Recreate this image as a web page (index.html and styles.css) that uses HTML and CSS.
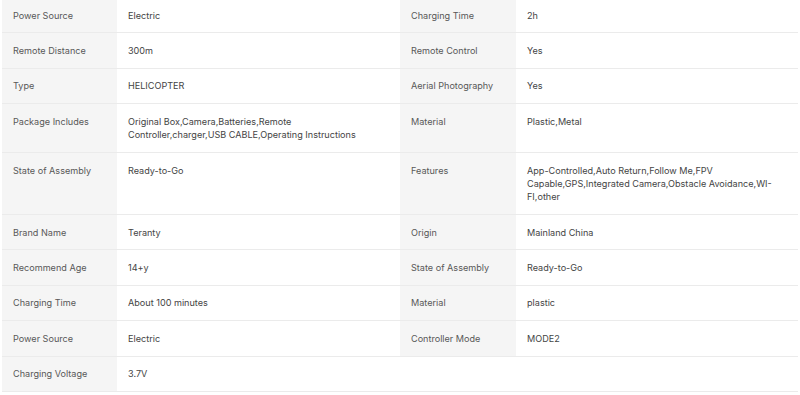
FILE: index.html
```html
<!DOCTYPE html>
<html lang="en">
<head>
<meta charset="utf-8">
<title>Specifications</title>
<link rel="stylesheet" href="styles.css">
</head>
<body>
<table class="specs">
  <colgroup>
    <col class="c-label">
    <col class="c-value">
    <col class="c-label2">
    <col class="c-value2">
  </colgroup>
  <tbody>
    <tr><th>Power Source</th><td>Electric</td><th>Charging Time</th><td>2h</td></tr>
    <tr><th>Remote Distance</th><td>300m</td><th>Remote Control</th><td>Yes</td></tr>
    <tr><th>Type</th><td>HELICOPTER</td><th>Aerial Photography</th><td>Yes</td></tr>
    <tr><th>Package Includes</th><td>Original Box,Camera,Batteries,Remote Controller,charger,USB CABLE,Operating Instructions</td><th>Material</th><td>Plastic,Metal</td></tr>
    <tr><th>State of Assembly</th><td>Ready-to-Go</td><th>Features</th><td>App-Controlled,Auto Return,Follow Me,FPV Capable,GPS,Integrated Camera,Obstacle Avoidance,WI-FI,other</td></tr>
    <tr><th>Brand Name</th><td>Teranty</td><th>Origin</th><td>Mainland China</td></tr>
    <tr><th>Recommend Age</th><td>14+y</td><th>State of Assembly</th><td>Ready-to-Go</td></tr>
    <tr><th>Charging Time</th><td>About 100 minutes</td><th>Material</th><td>plastic</td></tr>
    <tr><th>Power Source</th><td>Electric</td><th>Controller Mode</th><td>MODE2</td></tr>
    <tr><th>Charging Voltage</th><td>3.7V</td><td class="empty"></td><td class="empty"></td></tr>
  </tbody>
</table>
</body>
</html>
```

FILE: styles.css
```css
html, body {
  margin: 0;
  padding: 0;
  background: #ffffff;
}

body {
  font-family: "Inter", "Liberation Sans", sans-serif;
  font-size: 9.1px;
  color: #333333;
}

.specs {
  width: 796px;
  margin: -2px 0 0 2px;
  border-collapse: collapse;
  table-layout: fixed;
}

.c-label { width: 115px; }
.c-value { width: 283px; }
.c-label2 { width: 116px; }
.c-value2 { width: 282px; }

.specs th,
.specs td {
  padding: 10.6px 20px 10.6px 11px;
  line-height: 13.25px;
  text-align: left;
  vertical-align: top;
  border-bottom: 1px solid #ebebeb;
}

.specs th {
  font-weight: normal;
  background: #f5f5f5;
  color: #585858;
}

.specs td {
  background: #ffffff;
  color: #444444;
}
```
